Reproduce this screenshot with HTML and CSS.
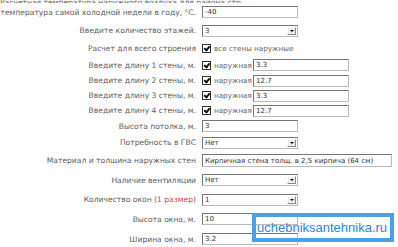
FILE: index.html
```html
<!DOCTYPE html>
<html lang="ru">
<head>
  <meta charset="UTF-8" />
  <title>Расчет теплопотерь</title>
  <link rel="stylesheet" href="styles.css">
</head>
<body>
  <!-- Form rows -->
  <div class="form">
    <div class="row cut">
      <span class="label">Расчетная температура наружного воздуха для района стр.</span>
      <span></span>
    </div>

    <div class="row r18">
      <span class="label">температура самой холодной недели в году, °C.</span>
      <input class="field" type="text" value="-40">
    </div>

    <div class="row r19">
      <span class="label">Введите количество этажей.</span>
      <span class="select"><select><option>3</option></select><span class="arrow"></span></span>
    </div>

    <div class="row r17">
      <span class="label">Расчет для всего строения</span>
      <span class="check-line"><span class="check"></span><span class="check-text">все стены наружные</span></span>
    </div>

    <div class="row r16">
      <span class="label">Введите длину 1 стены, м.</span>
      <span class="wall"><span class="check"></span><span class="check-text">наружная</span><input class="field" type="text" value="3.3"></span>
    </div>

    <div class="row r15">
      <span class="label">Введите длину 2 стены, м.</span>
      <span class="wall"><span class="check"></span><span class="check-text">наружная</span><input class="field" type="text" value="12.7"></span>
    </div>

    <div class="row r15">
      <span class="label">Введите длину 3 стены, м.</span>
      <span class="wall"><span class="check"></span><span class="check-text">наружная</span><input class="field" type="text" value="3.3"></span>
    </div>

    <div class="row r15">
      <span class="label">Введите длину 4 стены, м.</span>
      <span class="wall"><span class="check"></span><span class="check-text">наружная</span><input class="field" type="text" value="12.7"></span>
    </div>

    <div class="row r16">
      <span class="label">Высота потолка, м.</span>
      <input class="field" type="text" value="3">
    </div>

    <div class="row r17">
      <span class="label">Потребность в ГВС</span>
      <span class="select"><select><option>Нет</option></select><span class="arrow"></span></span>
    </div>

    <div class="row r19">
      <span class="label">Материал и толщина наружных стен</span>
      <span class="select wide"><select><option>Кирпичная стена толщ. в 2,5 кирпича (64 см)</option></select></span>
    </div>

    <div class="row r20">
      <span class="label">Наличие вентиляции</span>
      <span class="select"><select><option>Нет</option></select><span class="arrow"></span></span>
    </div>

    <div class="row r19">
      <span class="label">Количество окон (<span class="red">1 размер</span>)</span>
      <span class="select"><select><option>1</option></select><span class="arrow"></span></span>
    </div>

    <div class="row r20">
      <span class="label">Высота окна, м.</span>
      <input class="field" type="text" value="10">
    </div>

    <div class="row r20">
      <span class="label">Ширина окна, м.</span>
      <input class="field" type="text" value="3.2">
    </div>
  </div>

  <!-- Site watermark over the form -->
  <div class="watermark">uchebniksantehnika.ru</div>
</body>
</html>
```

FILE: styles.css
```css
/* Page */
body {
  margin: 0;
  font-family: "DejaVu Sans", Verdana, sans-serif;
  font-size: 7.6px;
  color: #606060;
  background: #fff;
  overflow: hidden;
  position: relative;
  height: 247px;
}

.form {
  display: flex;
  flex-direction: column;
}

/* One label + control line */
.row {
  display: grid;
  grid-template-columns: 196px 1fr;
  column-gap: 6px;
  align-items: center;
}

.cut {
  height: 3px;
  overflow: hidden;
  align-items: end;
  line-height: 6px;
}

.r15 { height: 15px; }
.r16 { height: 16px; }
.r17 { height: 17px; }
.r18 { height: 18px; }
.r19 { height: 19px; }
.r20 { height: 20px; }

.label {
  text-align: right;
  white-space: nowrap;
}

.red {
  color: #d0464e;
}

/* Text inputs */
.field {
  box-sizing: border-box;
  width: 96px;
  height: 12px;
  margin: 0;
  padding: 0 2px;
  border: 1px solid;
  border-color: #777 #bbb #bbb #777;
  font-family: "DejaVu Sans", Verdana, sans-serif;
  font-size: 7px;
  color: #333;
  background: #fff;
}

/* Drop-down lists */
.select {
  box-sizing: border-box;
  display: flex;
  align-items: center;
  width: 96px;
  height: 12px;
  border: 1px solid;
  border-color: #777 #bbb #bbb #777;
  background: #fff;
}

.select.wide {
  width: 190px;
  height: 13px;
}

.select select {
  flex: 1;
  min-width: 0;
  height: 100%;
  margin: 0;
  padding: 0 2px;
  border: 0;
  appearance: none;
  background: transparent;
  font-family: "DejaVu Sans", Verdana, sans-serif;
  font-size: 7px;
  color: #333;
}

.arrow {
  box-sizing: border-box;
  width: 9px;
  height: 8px;
  margin-right: 1px;
  background: #ececec;
  border: 1px solid;
  border-color: #fff #888 #888 #fff;
  display: flex;
  align-items: center;
  justify-content: center;
}

.arrow::after {
  content: "";
  border-left: 2px solid transparent;
  border-right: 2px solid transparent;
  border-top: 2px solid #111;
}

/* Checkboxes */
.check-line, .wall {
  display: flex;
  align-items: center;
}

.check {
  box-sizing: border-box;
  flex: none;
  width: 9px;
  height: 9px;
  border: 1px solid #333;
  background: #fff;
  position: relative;
}

.check::after {
  content: "";
  position: absolute;
  left: 2px;
  top: 0px;
  width: 2px;
  height: 4px;
  border-right: 2px solid #111;
  border-bottom: 2px solid #111;
  transform: rotate(40deg);
}

.check-text {
  margin-left: 3px;
  font-size: 7.2px;
  color: #666;
}

.wall .check-text {
  width: 39px;
  white-space: nowrap;
}

/* Watermark */
.watermark {
  position: absolute;
  left: 252px;
  top: 213px;
  width: 142px;
  height: 29px;
  box-sizing: border-box;
  border: 4px solid #4ba0ea;
  font-family: "Liberation Sans", Arial, sans-serif;
  font-size: 13px;
  color: #2f87da;
  line-height: 21px;
  padding-left: 1px;
}
```
